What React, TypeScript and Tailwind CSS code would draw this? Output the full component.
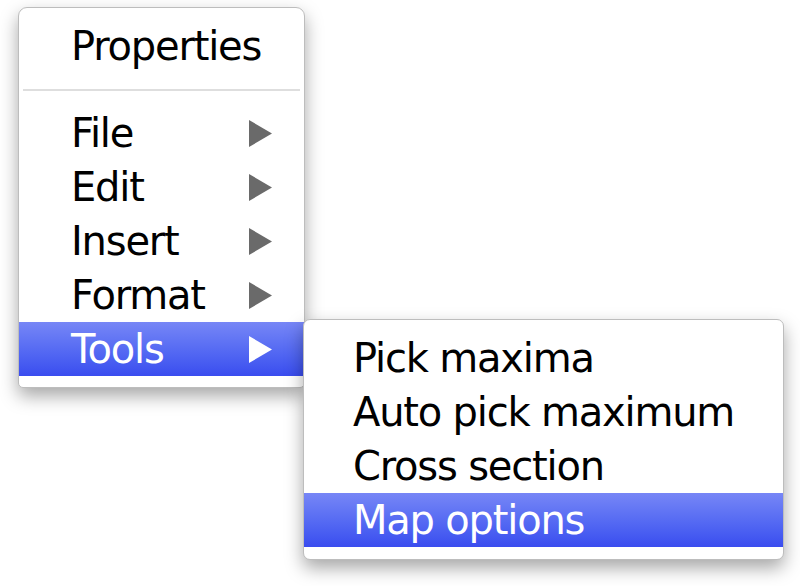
import React from "react";

const font = { fontFamily: '"DejaVu Sans", "Lucida Grande", Verdana, sans-serif' };

function Arrow({ active }: { active?: boolean }) {
  return (
    <svg width="23" height="27" viewBox="0 0 23 27" className="shrink-0">
      <polygon points="0,0 23,13.5 0,27" fill={active ? "#ffffff" : "#6a6a6a"} />
    </svg>
  );
}

function Row({ label, active, arrow }: { label: string; active?: boolean; arrow?: boolean }) {
  return (
    <div
      className={`flex h-[54px] items-center justify-between pl-[52px] pr-[32px] ${
        active ? "bg-gradient-to-b from-[#7786f6] to-[#3a4cef] text-white" : "text-black"
      }`}
    >
      <span className="text-[40px] leading-none tracking-[-1.2px]">{label}</span>
      {arrow && <Arrow active={active} />}
    </div>
  );
}

export default function App() {
  const items = ["File", "Edit", "Insert", "Format", "Tools"];
  const sub = ["Pick maxima", "Auto pick maximum", "Cross section", "Map options"];

  return (
    <div className="relative h-[586px] w-[800px] overflow-hidden bg-white" style={font}>
      {/* main menu */}
      <div className="absolute left-[18px] top-[7px] w-[287px] rounded-t-[9px] rounded-b-[5px] border border-[#bdbdbd] bg-white pt-[11px] pb-[11px] shadow-[0_8px_18px_rgba(0,0,0,0.35)]">
        <div className="flex h-[54px] items-center pl-[52px]">
          <span className="text-[40px] leading-none tracking-[-1.2px] text-black">Properties</span>
        </div>
        <div className="flex h-[33px] items-center px-[4px]">
          <div className="h-[2px] w-full bg-[#dedede]" />
        </div>
        {items.map((it) => (
          <Row key={it} label={it} arrow active={it === "Tools"} />
        ))}
      </div>

      {/* submenu */}
      <div className="absolute left-[303px] top-[319px] w-[481px] rounded-[7px] border border-[#bdbdbd] bg-white pt-[11px] pb-[12px] shadow-[0_8px_18px_rgba(0,0,0,0.35)]">
        {sub.map((s) => (
          <div
            key={s}
            className={`flex h-[54px] items-center pl-[49px] ${
              s === "Map options" ? "bg-gradient-to-b from-[#7786f6] to-[#3a4cef] text-white" : "text-black"
            }`}
          >
            <span className="text-[40px] leading-none tracking-[-1.2px]">{s}</span>
          </div>
        ))}
      </div>
    </div>
  );
}
